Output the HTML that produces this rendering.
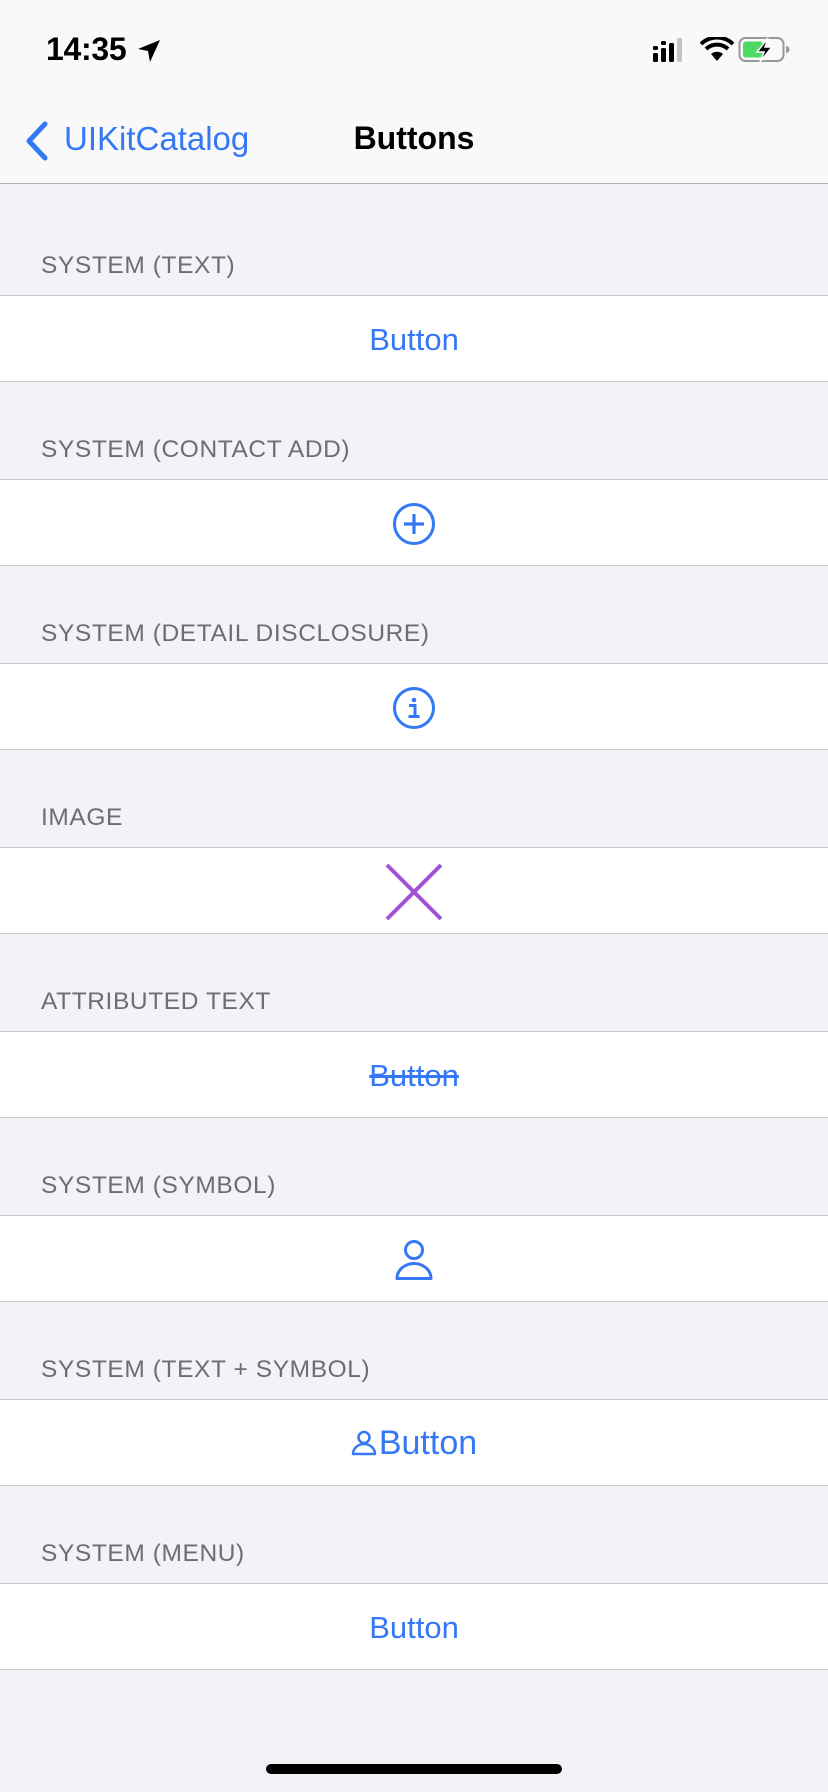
<!DOCTYPE html>
<html><head><meta charset="utf-8"><style>
*{margin:0;padding:0;box-sizing:border-box}
body{width:828px;height:1792px;background:#f2f2f7;font-family:"Liberation Sans",sans-serif;position:relative;overflow:hidden}
.nav{position:absolute;left:0;top:0;width:828px;height:184px;background:#f9f9f9;border-bottom:1px solid #b2b2b2}
.abs{position:absolute}
.hdr{position:absolute;left:41px;font-size:24.5px;letter-spacing:0.6px;color:#6d6d72;line-height:26px}
.row{position:absolute;left:0;width:828px;height:87px;background:#fff;border-top:1px solid #c8c7cc;border-bottom:1px solid #c8c7cc}
.btn{position:absolute;left:0;width:828px;text-align:center;color:#3478f6;font-size:31px;line-height:87px;top:0}
</style></head><body>
<div class="nav">
 <div class="abs" style="left:46px;top:31px;font-size:32px;font-weight:bold;letter-spacing:-0.3px">14:35</div>
 <svg class="abs" style="left:136px;top:38px" width="26" height="26" viewBox="0 0 26 26"><path d="M24 2 L2 11 L12 13 L14 24 Z" fill="#000"/></svg>
 <svg class="abs" style="left:652px;top:36px" width="44" height="28" viewBox="0 0 44 28">
  <rect x="1" y="17" width="5" height="9" rx="1.5"/><rect x="9" y="12" width="5" height="14" rx="1.5"/><rect x="17" y="7" width="5" height="19" rx="1.5"/><rect x="25" y="2" width="5" height="24" rx="1.5" fill="#c4c4c4"/>
  <rect x="1" y="10" width="5" height="4" rx="1.5"/><rect x="9" y="5" width="5" height="4" rx="1.5"/>
 </svg>
 <svg class="abs" style="left:700px;top:37px" width="34" height="26" viewBox="0 0 34 26"><path d="M17 24 L11 17 A9 9 0 0 1 23 17 Z" fill="#000"/><path d="M6 12 A16 16 0 0 1 28 12" stroke="#000" stroke-width="4" fill="none"/><path d="M1 7 A23 23 0 0 1 33 7" stroke="#000" stroke-width="4" fill="none"/></svg>
 <svg class="abs" style="left:738px;top:36px" width="54" height="28" viewBox="0 0 54 28"><rect x="1.5" y="2" width="44" height="23" rx="6" fill="none" stroke="#999" stroke-width="2"/><rect x="5" y="5.5" width="20" height="16" rx="3" fill="#4cd964"/><path d="M48 10 v7 a3 3 0 0 0 0 -7z" fill="#999"/><path d="M30 2 L19 16 H26 L22 26 L34 11 H27 Z" fill="#000" stroke="#fff" stroke-width="1.5"/></svg>
 <svg class="abs" style="left:22px;top:121px" width="30" height="40" viewBox="0 0 30 40"><path d="M23 3 L7 20 L23 37" stroke="#3478f6" stroke-width="5" fill="none" stroke-linecap="round" stroke-linejoin="round"/></svg>
 <div class="abs" style="left:64px;top:120px;font-size:33px;color:#3478f6">UIKitCatalog</div>
 <div class="abs" style="left:0;width:828px;text-align:center;top:120px;font-size:32px;font-weight:bold;color:#000">Buttons</div>
</div>

<div class="hdr" style="top:253px">SYSTEM (TEXT)</div>
<div class="row" style="top:295px"><div class="btn">Button</div></div>

<div class="hdr" style="top:437px">SYSTEM (CONTACT ADD)</div>
<div class="row" style="top:479px"><svg class="abs" style="left:392px;top:22px" width="44" height="44" viewBox="0 0 44 44"><circle cx="22" cy="22" r="19.5" fill="none" stroke="#3478f6" stroke-width="3"/><path d="M22 12v20M12 22h20" stroke="#3478f6" stroke-width="3.2"/></svg></div>

<div class="hdr" style="top:621px">SYSTEM (DETAIL DISCLOSURE)</div>
<div class="row" style="top:663px"><svg class="abs" style="left:392px;top:22px" width="44" height="44" viewBox="0 0 44 44"><circle cx="22" cy="22" r="19.5" fill="none" stroke="#3478f6" stroke-width="3"/><circle cx="22" cy="14" r="2.3" fill="#3478f6"/><path d="M17 19.5h6v11M16.5 30.5h11" stroke="#3478f6" stroke-width="3" fill="none"/></svg></div>

<div class="hdr" style="top:805px">IMAGE</div>
<div class="row" style="top:847px"><svg class="abs" style="left:384px;top:14px" width="60" height="60" viewBox="0 0 60 60"><path d="M3 3L57 57M57 3L3 57" stroke="#a452d6" stroke-width="4"/></svg></div>

<div class="hdr" style="top:989px">ATTRIBUTED TEXT</div>
<div class="row" style="top:1031px"><div class="btn" style="text-decoration:line-through">Button</div></div>

<div class="hdr" style="top:1173px">SYSTEM (SYMBOL)</div>
<div class="row" style="top:1215px"><svg class="abs" style="left:394px;top:23px" width="40" height="42" viewBox="0 0 40 42"><circle cx="20" cy="11" r="8.5" fill="none" stroke="#3478f6" stroke-width="3"/><path d="M3 39.5 A17 15 0 0 1 37 39.5 Z" fill="none" stroke="#3478f6" stroke-width="3" stroke-linejoin="round"/></svg></div>

<div class="hdr" style="top:1357px">SYSTEM (TEXT + SYMBOL)</div>
<div class="row" style="top:1399px"><div class="btn" style="font-size:34px;padding-left:28px">Button</div><svg class="abs" style="left:351px;top:30px" width="26" height="26" viewBox="0 0 26 26"><circle cx="13" cy="7.5" r="5.5" fill="none" stroke="#3478f6" stroke-width="2.5"/><path d="M2 24 A11 10 0 0 1 24 24 Z" fill="none" stroke="#3478f6" stroke-width="2.5" stroke-linejoin="round"/></svg></div>

<div class="hdr" style="top:1541px">SYSTEM (MENU)</div>
<div class="row" style="top:1583px"><div class="btn">Button</div></div>

<div class="abs" style="left:266px;top:1764px;width:296px;height:10px;border-radius:5px;background:#000"></div>
</body></html>
